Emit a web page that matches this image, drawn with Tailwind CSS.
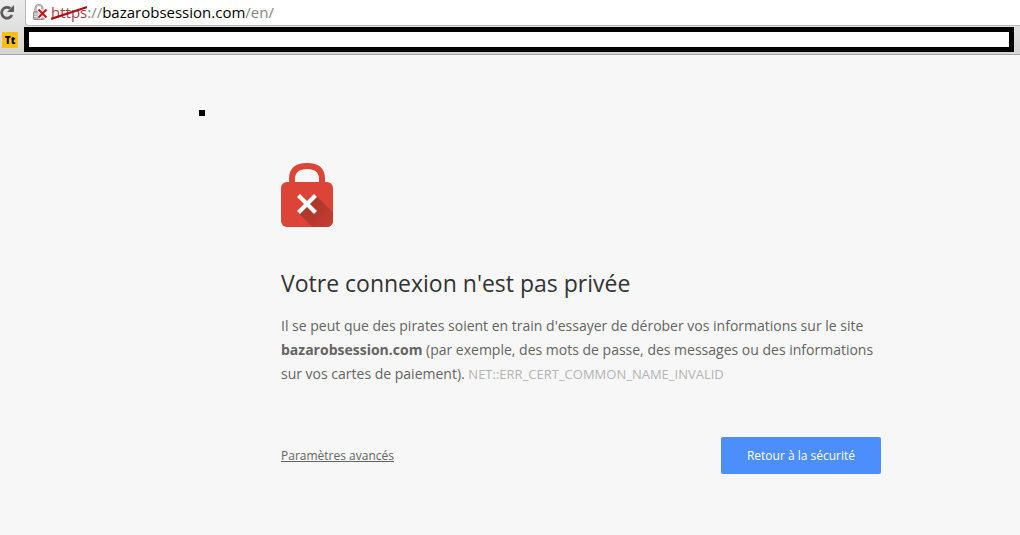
<!DOCTYPE html>
<html lang="fr">
<head>
  <meta charset="UTF-8" />
  <title>Erreur liée à la confidentialité</title>
  <script src="https://cdn.jsdelivr.net/npm/@tailwindcss/browser@4"></script>
</head>
<body class="bg-[#f7f7f7] min-h-screen font-['Open_Sans',sans-serif] text-[#646464]">

  <!-- Barre d'outils -->
  <header class="bg-linear-to-b from-[#ececec] to-[#d6d5d6] border-b border-[#a5a5a5] h-[55px]">
    <div class="flex h-[26px]">
      <button aria-label="Actualiser" class="w-[25px] shrink-0">
        <svg class="w-[15px] h-[26px]" viewBox="0 0 15 26" fill="none">
          <path d="M10.3 8.4A5.4 5.4 0 1 0 12 15" stroke="#5c5c5c" stroke-width="2.7" />
          <path d="M14 5v7H7z" fill="#5c5c5c" />
        </svg>
      </button>
      <div class="flex-1 flex items-start gap-[3px] bg-white border-l border-b border-[#b8b8b8] rounded-bl pl-[6px]">
        <svg class="w-4 h-[26px] shrink-0" viewBox="0 0 16 26">
          <path d="M3.5 12V8.5a3.5 3.5 0 0 1 7 0V12" fill="none" stroke="#969696" stroke-width="2.2" />
          <path d="M3.5 12V8.5a3.5 3.5 0 0 1 7 0V12" fill="none" stroke="#d0d0d0" stroke-width="0.8" />
          <rect x="1.5" y="11.5" width="11" height="8" rx="1" fill="#b4b4b4" stroke="#8d8d8d" />
          <path d="M2 14h10M2 16.5h10" stroke="#dedede" />
          <path d="M6.5 9.5l8 8M14.5 9.5l-8 8" stroke="#fff" stroke-width="4" />
          <path d="M6.5 9.5l8 8M14.5 9.5l-8 8" stroke="#c9151b" stroke-width="2.2" />
        </svg>
        <div class="text-[15px] leading-6 text-[#858585] whitespace-nowrap">
          <span class="relative text-[#a3404b]">https<svg class="absolute left-0 top-0 w-full h-full" viewBox="0 0 36 20" preserveAspectRatio="none">
            <path d="M0 17L36 5" stroke="#a8121a" stroke-width="2.2" />
          </svg></span>://<span class="text-black">bazarobsession.com</span>/en/
        </div>
      </div>
    </div>
    <div class="flex items-start pt-px pl-[2px] pr-[6px]">
      <a href="#" aria-label="Tt" class="w-4 h-4 mt-[5px] mr-[6px] shrink-0 bg-[#fdc00f] text-black text-[10px] leading-4 font-extrabold text-center">Tt</a>
      <div class="flex-1 h-[25px] bg-white border-5 border-black"></div>
    </div>
  </header>

  <div class="absolute left-[199px] top-[110px] w-[6px] h-[6px] bg-black"></div>

  <main class="w-[600px] ml-[281px] pt-[108px]">
    <svg class="w-[52px] h-16" viewBox="0 0 52 64">
      <defs>
        <linearGradient id="shadow" x1="26" y1="36" x2="52" y2="62" gradientUnits="userSpaceOnUse">
          <stop offset="0" stop-color="#a8352a" />
          <stop offset="1" stop-color="#c63d31" />
        </linearGradient>
      </defs>
      <path d="M11 23V16Q11 3 26 3T41 16V23" fill="none" stroke="#db4437" stroke-width="6" />
      <rect y="19" width="52" height="45" rx="6" fill="#db4437" />
      <path d="M34.5 32L52 49.5V58a6 6 0 0 1-6 6H31.5L17 49.5L26 41z" fill="url(#shadow)" />
      <path d="M17.5 32.5l17 17M34.5 32.5l-17 17" stroke="#fff" stroke-width="4.2" />
    </svg>

    <h1 class="mt-10 text-[23px] leading-8 text-[#333]">Votre connexion n'est pas privée</h1>

    <p class="mt-[15px] text-sm leading-6">
      Il se peut que des pirates soient en train d'essayer de dérober vos informations sur le site<br />
      <strong>bazarobsession.com</strong> (par exemple, des mots de passe, des messages ou des informations<br />
      sur vos cartes de paiement). <span class="text-[13px] text-[#b4b4b4]">NET::ERR_CERT_COMMON_NAME_INVALID</span>
    </p>

    <div class="mt-[51px] flex items-center justify-between">
      <a href="#" class="text-xs underline">Paramètres avancés</a>
      <button class="w-40 h-[37px] bg-[#4c8efb] rounded-xs text-white text-xs">Retour à la sécurité</button>
    </div>
  </main>

</body>
</html>
